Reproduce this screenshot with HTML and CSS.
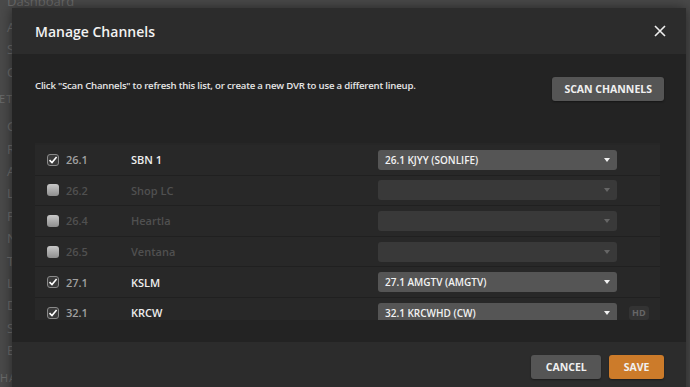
FILE: index.html
```html
<!DOCTYPE html>
<html>
<head>
  <meta charset="utf-8">
  <title>Manage Channels</title>
  <link rel="stylesheet" href="styles.css">
</head>
<body>
  <div class="page">
    <nav class="sidebar">
      <div class="nav-top">Dashboard</div>
      <ul class="nav-list">
        <li>Account</li>
        <li>Sync</li>
        <li>Companions</li>
      </ul>
      <div class="nav-head">SETTINGS</div>
      <ul class="nav-list">
        <li>General</li>
        <li>Remote Access</li>
        <li>Agents</li>
        <li>Library</li>
        <li>Plugins</li>
        <li>Network</li>
        <li>Transcoder</li>
        <li>Languages</li>
        <li>DLNA</li>
        <li>Scheduled Tasks</li>
        <li>Extras</li>
      </ul>
      <div class="nav-head">CHANNELS</div>
    </nav>

    <div class="modal">
      <div class="modal-header">
        <h2>Manage Channels</h2>
        <button class="close-btn">
          <svg width="12" height="12" viewBox="0 0 12 12"><path d="M1 1 L11 11 M11 1 L1 11" stroke="#eee" stroke-width="1.6" fill="none"/></svg>
        </button>
      </div>

      <div class="modal-body">
        <div class="intro">
          <p>Click "Scan Channels" to refresh this list, or create a new DVR to use a different lineup.</p>
          <button class="btn">SCAN CHANNELS</button>
        </div>

        <div class="channel-list">
          <div class="row">
            <span class="check on"><svg width="10" height="10" viewBox="0 0 10 10"><path d="M1.5 5.2 L4 7.6 L8.6 2" stroke="#fff" stroke-width="1.6" fill="none"/></svg></span>
            <span class="num">26.1</span>
            <span class="name">SBN 1</span>
            <div class="select">26.1 KJYY (SONLIFE)<span class="caret"></span></div>
          </div>
          <div class="row off">
            <span class="check"></span>
            <span class="num">26.2</span>
            <span class="name">Shop LC</span>
            <div class="select"><span class="caret"></span></div>
          </div>
          <div class="row off">
            <span class="check"></span>
            <span class="num">26.4</span>
            <span class="name">Heartla</span>
            <div class="select"><span class="caret"></span></div>
          </div>
          <div class="row off">
            <span class="check"></span>
            <span class="num">26.5</span>
            <span class="name">Ventana</span>
            <div class="select"><span class="caret"></span></div>
          </div>
          <div class="row">
            <span class="check on"><svg width="10" height="10" viewBox="0 0 10 10"><path d="M1.5 5.2 L4 7.6 L8.6 2" stroke="#fff" stroke-width="1.6" fill="none"/></svg></span>
            <span class="num">27.1</span>
            <span class="name">KSLM</span>
            <div class="select">27.1 AMGTV (AMGTV)<span class="caret"></span></div>
          </div>
          <div class="row">
            <span class="check on"><svg width="10" height="10" viewBox="0 0 10 10"><path d="M1.5 5.2 L4 7.6 L8.6 2" stroke="#fff" stroke-width="1.6" fill="none"/></svg></span>
            <span class="num">32.1</span>
            <span class="name">KRCW</span>
            <div class="select">32.1 KRCWHD (CW)<span class="caret"></span></div>
            <span class="hd">HD</span>
          </div>
        </div>
      </div>

      <div class="modal-footer">
        <button class="btn">CANCEL</button>
        <button class="btn save">SAVE</button>
      </div>
    </div>
  </div>
</body>
</html>
```

FILE: styles.css
```css
body {
  margin: 0;
  background: #4a4a4a;
  font-family: "Open Sans", "Noto Sans", sans-serif;
  overflow: hidden;
}
.page {
  position: relative;
  width: 690px;
  height: 387px;
  overflow: hidden;
}
.sidebar {
  padding-left: 7px;
  color: #6c6c6c;
  font-size: 13px;
}
.nav-top {
  margin-top: -9px;
  line-height: 20px;
}
.nav-list {
  list-style: none;
  margin: 0;
  padding: 0;
}
.nav-list li {
  line-height: 22.4px;
}
.nav-list:first-of-type {
  margin-top: 5px;
}
.nav-head {
  margin-left: -15px;
  font-size: 11px;
  letter-spacing: 1px;
  line-height: 18px;
  margin-top: 7px;
  margin-bottom: 7px;
}
.modal {
  position: absolute;
  left: 12px;
  top: 8px;
  width: 674px;
  height: 400px;
  background: #232323;
  box-shadow: 0 0 12px rgba(0,0,0,0.5);
  color: #eee;
}
.modal-header {
  height: 46px;
  background: #2c2c2c;
  display: flex;
  align-items: center;
  justify-content: space-between;
  padding: 0 20px 0 23px;
}
.modal-header h2 {
  margin: 0;
  font-size: 14px;
  font-weight: 600;
  color: #f2f2f2;
}
.close-btn {
  background: none;
  border: none;
  padding: 0;
  display: flex;
}
.modal-body {
  padding: 23px 22px 22px 23px;
}
.intro {
  display: flex;
  justify-content: space-between;
  align-items: flex-start;
}
.intro p {
  margin: 2px 0 0;
  font-size: 9.6px;
  font-weight: 600;
  letter-spacing: -0.2px;
  color: #e6e6e6;
}
.btn {
  height: 24px;
  padding: 0 14.5px;
  border: none;
  border-radius: 3px;
  background: #555;
  color: #f0f0f0;
  font-family: "Open Sans", sans-serif;
  font-size: 10.5px;
  font-weight: 700;
  box-shadow: 0 1px 2px rgba(0,0,0,0.4);
}
.intro .btn {
  padding: 0 12px;
}
.channel-list {
  margin-top: 42px;
  margin-right: 4px;
  height: 177px;
  overflow: hidden;
  padding-top: 2px;
  box-sizing: border-box;
  background: #262626;
}
.row {
  display: flex;
  align-items: center;
  height: 30.6px;
  padding-left: 12px;
  box-sizing: border-box;
  border-bottom: 1px solid #202020;
  background: #282828;
  font-size: 11px;
  font-weight: 600;
}
.check {
  width: 12px;
  height: 12px;
  margin-right: 7px;
  border-radius: 3px;
  box-sizing: border-box;
  background: linear-gradient(#c8c8c8, #8e8e8e);
  display: flex;
  align-items: center;
  justify-content: center;
}
.check.on {
  background: #3a3a3a;
  border: 1px solid #8a8a8a;
}
.num {
  width: 65px;
  color: #a0a0a0;
}
.name {
  width: 247px;
  color: #eee;
}
.row.off .num,
.row.off .name {
  color: #505050;
}
.select {
  position: relative;
  width: 239px;
  height: 20px;
  line-height: 20px;
  padding-left: 7px;
  box-sizing: border-box;
  border-radius: 3px;
  background: #555;
  color: #f2f2f2;
  font-size: 10px;
}
.row.off .select {
  background: #393939;
}
.caret {
  position: absolute;
  right: 7px;
  top: 8px;
  border-left: 3.5px solid transparent;
  border-right: 3.5px solid transparent;
  border-top: 4px solid #f2f2f2;
}
.row.off .caret {
  border-top-color: #666;
}
.hd {
  margin-left: 12px;
  padding: 0 3px;
  height: 14px;
  line-height: 14px;
  border-radius: 3px;
  background: #333;
  color: #666;
  font-size: 9px;
  font-weight: 700;
}
.modal-footer {
  height: 45px;
  background: #2c2c2c;
  display: flex;
  justify-content: flex-end;
  align-items: flex-start;
  gap: 8px;
  padding: 13px 22px 0 0;
  box-sizing: border-box;
}
.save {
  background: #cc7b2a;
}
```
